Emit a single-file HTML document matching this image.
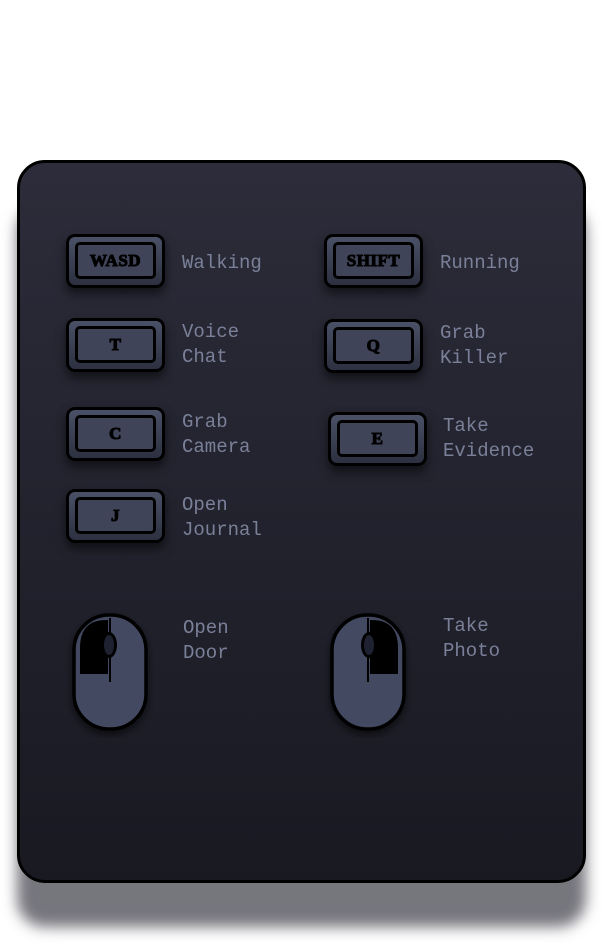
<!DOCTYPE html>
<html><head><style>
body{margin:0;width:602px;height:945px;background:#fff;position:relative;overflow:hidden;font-family:"Liberation Mono",monospace}
.panel{position:absolute;left:17px;top:160px;width:563px;height:717px;border:3px solid #000;border-radius:28px;background:linear-gradient(#2c2c3a,#191922);box-shadow:0 44px 14px rgba(60,60,70,.7)}
.key{position:absolute;width:93px;height:48px;border:3px solid #000;border-radius:9px;background:linear-gradient(#4a5066,#2c3040);box-shadow:0 6px 10px rgba(0,0,0,.55)}
.key .f{position:absolute;left:6px;top:5px;right:6px;bottom:6px;border:3px solid #000;border-radius:5px;background:#3f4458;font:bold 17px "Liberation Serif",serif;-webkit-text-stroke:1px #000;color:#000;display:flex;align-items:center;justify-content:center;letter-spacing:.5px}
.t{position:absolute;color:#7a8098;font-size:19px;line-height:25px}
svg{position:absolute}
</style></head><body>
<div class="panel"></div>
<div class="key" style="left:66px;top:234px"><div class="f">WASD</div></div>
<div class="t" style="left:182px;top:251px">Walking</div>
<div class="key" style="left:324px;top:234px"><div class="f">SHIFT</div></div>
<div class="t" style="left:440px;top:251px">Running</div>
<div class="key" style="left:66px;top:318px"><div class="f">T</div></div>
<div class="t" style="left:182px;top:320px">Voice<br>Chat</div>
<div class="key" style="left:324px;top:319px"><div class="f">Q</div></div>
<div class="t" style="left:440px;top:321px">Grab<br>Killer</div>
<div class="key" style="left:66px;top:407px"><div class="f">C</div></div>
<div class="t" style="left:182px;top:410px">Grab<br>Camera</div>
<div class="key" style="left:328px;top:412px"><div class="f">E</div></div>
<div class="t" style="left:443px;top:414px">Take<br>Evidence</div>
<div class="key" style="left:66px;top:489px"><div class="f">J</div></div>
<div class="t" style="left:182px;top:493px">Open<br>Journal</div>
<svg style="left:66px;top:608px" width="90" height="130" viewBox="0 0 90 130">
<defs><filter id="s"><feDropShadow dx="0" dy="4" stdDeviation="4" flood-color="#000" flood-opacity=".6"/></filter></defs>
<rect x="8" y="7" width="72" height="114" rx="35" fill="#434a60" stroke="#000" stroke-width="3.5" filter="url(#s)"/>
<path d="M14 66 V40 Q14 12 40 12 H42 V66 Z" fill="#000"/>
<line x1="44" y1="10" x2="44" y2="74" stroke="#000" stroke-width="2"/>
<ellipse cx="43" cy="37" rx="8" ry="13" fill="#000"/>
<ellipse cx="43" cy="37" rx="5" ry="10" fill="#1e2130"/>
</svg>
<div class="t" style="left:183px;top:616px">Open<br>Door</div>
<svg style="left:324px;top:608px" width="90" height="130" viewBox="0 0 90 130">
<rect x="8" y="7" width="72" height="114" rx="35" fill="#434a60" stroke="#000" stroke-width="3.5" filter="url(#s)"/>
<path d="M74 66 V40 Q74 12 48 12 H46 V66 Z" fill="#000"/>
<line x1="44" y1="10" x2="44" y2="74" stroke="#000" stroke-width="2"/>
<ellipse cx="45" cy="37" rx="8" ry="13" fill="#000"/>
<ellipse cx="45" cy="37" rx="5" ry="10" fill="#1e2130"/>
</svg>
<div class="t" style="left:443px;top:614px">Take<br>Photo</div>
</body></html>
